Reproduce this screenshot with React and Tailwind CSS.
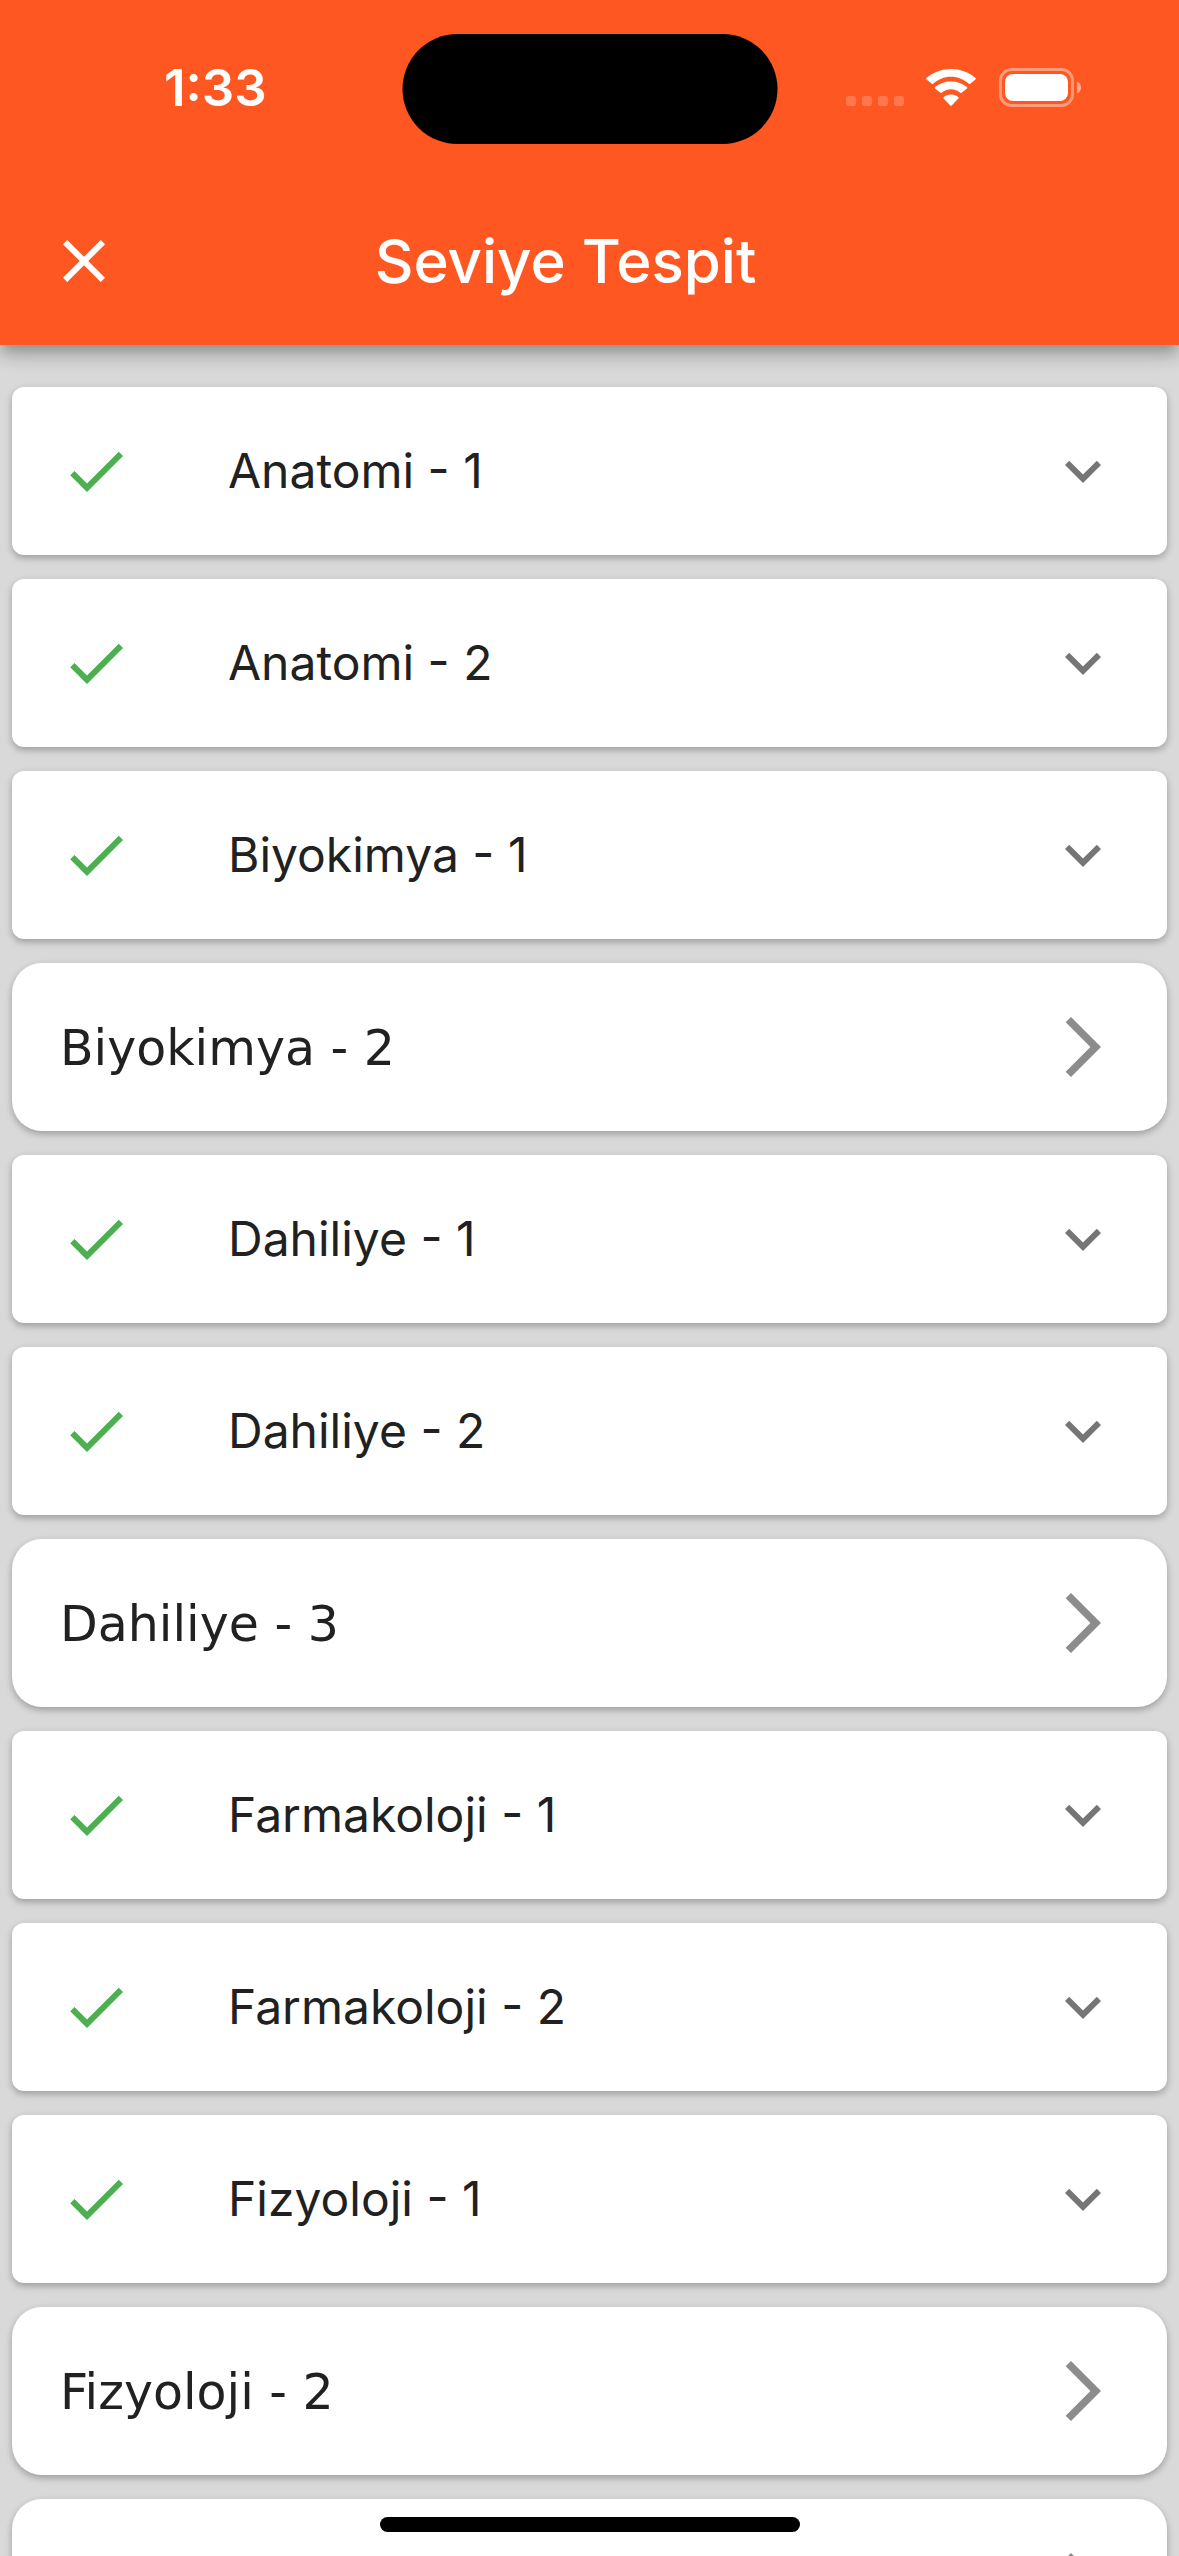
import { MdArrowForwardIos, MdCheck, MdClose, MdExpandMore } from "react-icons/md";

const exams = [
  { name: "Anatomi - 1", done: true },
  { name: "Anatomi - 2", done: true },
  { name: "Biyokimya - 1", done: true },
  { name: "Biyokimya - 2", done: false },
  { name: "Dahiliye - 1", done: true },
  { name: "Dahiliye - 2", done: true },
  { name: "Dahiliye - 3", done: false },
  { name: "Farmakoloji - 1", done: true },
  { name: "Farmakoloji - 2", done: true },
  { name: "Fizyoloji - 1", done: true },
  { name: "Fizyoloji - 2", done: false },
  { name: "Fizyoloji - 3", done: false },
];

function WifiIcon() {
  return (
    <svg width="50" height="37" viewBox="0 0 50 37" fill="#fff">
      <path d="M25 7.7c6.9 0 13.2 2.7 17.9 7.1.4.3.9.3 1.3 0l5.3-4.4c.5-.4.5-.9.1-1.3C43.2 3.4 34.5 0 25 0S6.8 3.4.4 9.1c-.4.4-.4.9.1 1.3l5.3 4.4c.4.3.9.3 1.3 0C11.8 10.4 18.1 7.7 25 7.7z" />
      <path d="M25 20.2c3.5 0 6.7 1.3 9.2 3.5.4.4.9.4 1.3 0l5.5-4.3c.4-.4.4-.9 0-1.3C36.7 14.6 31.2 12.6 25 12.6s-11.7 2-16 5.5c-.4.4-.4.9 0 1.3l5.500 4.300c.4.4.9.4 1.300 0 2.500-2.200 5.700-3.500 9.200-3.500z" />
      <path d="M32.4 28.2c.4.4.3.9 0 1.3l-6.7 7c-.4.4-1 .4-1.4 0l-6.7-7c-.3-.4-.4-.9 0-1.3 1.9-1.7 4.5-2.7 7.4-2.7s5.5 1 7.4 2.700z" />
    </svg>
  );
}

function BatteryIcon() {
  return (
    <svg width="82" height="39" viewBox="0 0 82 39">
      <rect x="1.5" y="1.5" width="72" height="36" rx="11" fill="none" stroke="#fff" strokeOpacity="0.4" strokeWidth="3" />
      <path d="M78 13.5c2.5 1 4 3.3 4 6s-1.5 5-4 6z" fill="#fff" fillOpacity="0.5" />
      <rect x="6" y="6" width="63" height="27" rx="8" fill="#fff" />
    </svg>
  );
}

function StatusBar() {
  return (
    <div className="relative flex h-[177px] items-start justify-between pt-[68px] pr-[98px] pl-[164px]">
      <span className="text-[51px] leading-[40px] font-semibold">1:33</span>
      <div className="absolute top-[34px] left-1/2 h-[110px] w-[375px] -translate-x-1/2 rounded-full bg-black" />
      <div className="flex items-center">
        <div className="mr-[22px] flex gap-[6px] pt-[27px]">
          <span className="size-[10px] rounded-[3px] bg-white/20" />
          <span className="size-[10px] rounded-[3px] bg-white/20" />
          <span className="size-[10px] rounded-[3px] bg-white/20" />
          <span className="size-[10px] rounded-[3px] bg-white/20" />
        </div>
        <WifiIcon />
        <div className="ml-[23px]">
          <BatteryIcon />
        </div>
      </div>
    </div>
  );
}

function DoneRow({ name }) {
  return (
    <button
      type="button"
      aria-expanded="false"
      className="flex h-[168px] w-full items-center rounded-xl bg-white px-12 text-left shadow-[0_3px_7px_rgba(0,0,0,0.28)]"
    >
      <MdCheck className="size-[72px] text-[#4caf50]" />
      <span className="ml-24 flex-1 text-[48px] leading-[48px]">{name}</span>
      <MdExpandMore className="size-[72px] text-[#757575]" />
    </button>
  );
}

function OpenRow({ name }) {
  return (
    <button
      type="button"
      className="flex h-[168px] w-full items-center rounded-[30px] bg-white px-12 text-left shadow-[0_3px_7px_rgba(0,0,0,0.28)]"
    >
      <span className="flex-1 pt-1 font-['DejaVu_Sans',sans-serif] text-[49px] leading-[48px]">{name}</span>
      <MdArrowForwardIos className="size-[72px] text-[#8c8c8c]" />
    </button>
  );
}

function App() {
  return (
    <div className="flex h-screen flex-col overflow-hidden bg-[#d9d9d9] font-[Inter,'Liberation_Sans',sans-serif] text-[#212121]">
      <header className="z-10 shrink-0 bg-[#ff5722] text-white shadow-[0_6px_12px_-3px_rgba(0,0,0,0.2),0_12px_15px_rgba(0,0,0,0.14),0_3px_30px_rgba(0,0,0,0.12)]">
        <StatusBar />
        <div className="flex h-[168px] items-center pl-12">
          <button type="button" aria-label="Kapat">
            <MdClose className="size-[72px]" />
          </button>
          <h1 className="flex-1 pr-[168px] text-center text-[60px] leading-[72px] font-medium">Seviye Tespit</h1>
        </div>
      </header>

      <main className="min-h-0 flex-1 px-3 pt-[42px]">
        <ul className="flex flex-col gap-6">
          {exams.map((exam) => (
            <li key={exam.name}>
              {exam.done ? <DoneRow name={exam.name} /> : <OpenRow name={exam.name} />}
            </li>
          ))}
        </ul>
      </main>

      {/* Home indicator */}
      <div className="fixed bottom-6 left-1/2 h-[15px] w-[420px] -translate-x-1/2 rounded-full bg-black" />
    </div>
  );
}

export default App;
